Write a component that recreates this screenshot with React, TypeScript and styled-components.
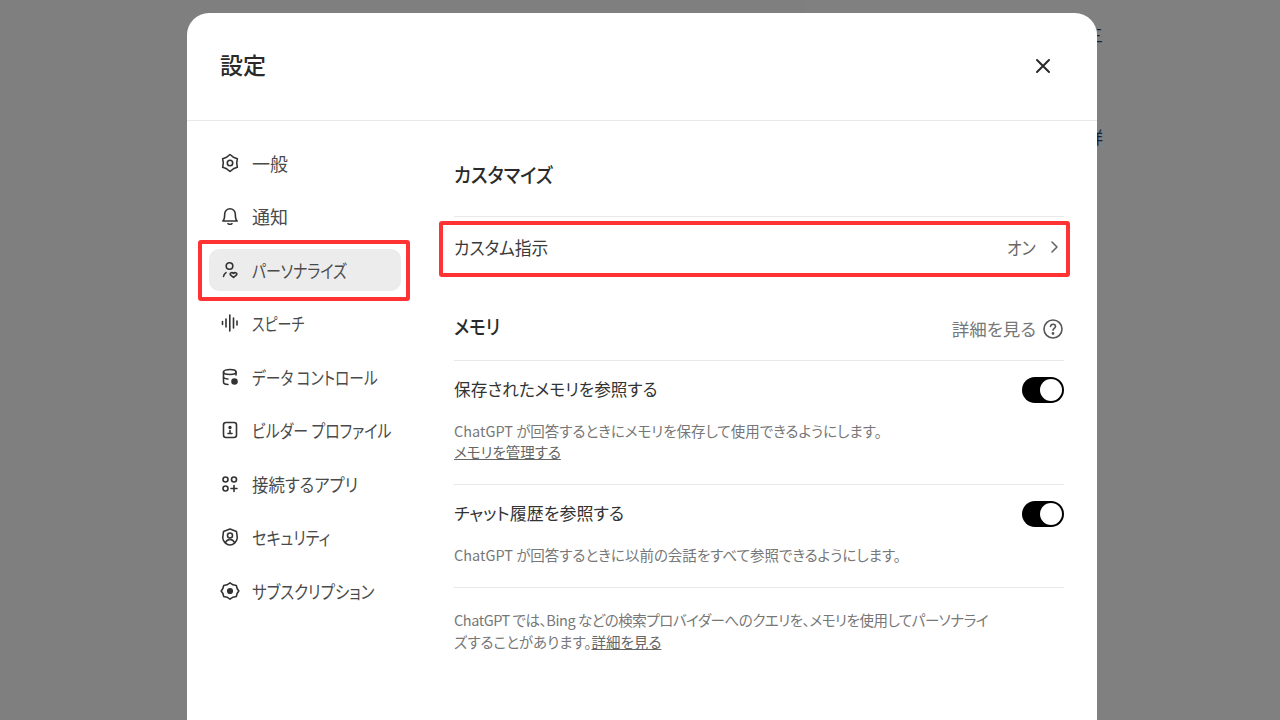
import styled, { createGlobalStyle } from "styled-components";

const GlobalStyle = createGlobalStyle`
  html, body {
    margin: 0;
    padding: 0;
    height: 720px;
    overflow: hidden;
    background: #7f7f7f;
    font-family: "Noto Sans CJK JP", "Noto Sans", sans-serif;
    font-feature-settings: "palt";
    color: #1f1f1f;
  }
`;

const Backdrop = styled.div`
  position: relative;
  width: 1280px;
  height: 720px;
  padding: 13px 0 0 187px;
  box-sizing: border-box;
  overflow: hidden;
  background: linear-gradient(to right, #7f7f7f 805px, #808080 805px);
`;

// text of the page behind the dialog, only a sliver shows past its right edge
const PeekText = styled.span<{ $top: number }>`
  position: absolute;
  left: 1086px;
  top: ${(p) => p.$top}px;
  width: 17px;
  font-size: 17px;
  line-height: 20px;
  color: #14233c;
  clip-path: inset(0 0 0 11px);
  overflow: hidden;
`;

const Modal = styled.div`
  position: relative;
  width: 910px;
  height: 760px;
  background: #fff;
  border-radius: 22px;
`;

const Header = styled.header`
  height: 107px;
  padding: 0 44px 0 33px;
  display: flex;
  align-items: center;
  justify-content: space-between;
  border-bottom: 1px solid #e8e8e8;
`;

const Title = styled.h1`
  margin: 0 0 5px;
  font-size: 23px;
  font-weight: 500;
  color: #2a2a2a;
`;

const CloseButton = styled.button`
  display: flex;
  padding: 0;
  margin-bottom: 1px;
  border: 0;
  background: none;
  color: #2a2a2a;
`;

const Body = styled.div`
  display: flex;
`;

const Sidebar = styled.nav`
  width: 192px;
  margin-left: 22px;
  padding-top: 21px;
  display: flex;
  flex-direction: column;
  gap: 11.5px;
  flex: none;
`;

const NavItem = styled.div<{ $active?: boolean }>`
  height: 42px;
  padding: 0 0 1px 11px;
  box-sizing: border-box;
  display: flex;
  align-items: center;
  gap: 12px;
  border-radius: 10px;
  font-size: 18px;
  color: #4a4a4a;
  white-space: nowrap;
  background: ${(p) => (p.$active ? "#ececec" : "transparent")};
  svg {
    flex: none;
    color: #333;
  }
`;

// the katakana in the reference are set much narrower than Noto's
const Narrow = styled.span<{ $scale: number }>`
  display: inline-block;
  transform: scaleX(${(p) => p.$scale});
  transform-origin: left center;
  white-space: nowrap;
`;

const SettingLabel = styled(Narrow)`
  margin-bottom: 4px;
`;

const Content = styled.main`
  width: 610px;
  margin-left: 53px;
  padding-top: 33px;
`;

const SectionHeading = styled.div`
  display: flex;
  align-items: center;
  justify-content: space-between;
  padding-bottom: 12px;
`;

const Heading = styled.h2`
  margin: 0;
  font-size: 20px;
  line-height: 42px;
  font-weight: 500;
  color: #2a2a2a;
`;

const CustomHeading = styled(Heading)`
  margin-bottom: 20px;
`;

const LearnMore = styled.div`
  display: flex;
  align-items: center;
  gap: 6px;
  font-size: 17.5px;
  color: #777;
  margin-top: 3px;
  svg {
    color: #555;
  }
`;

const RowLink = styled.div`
  height: 62px;
  box-sizing: border-box;
  padding-bottom: 2px;
  display: flex;
  align-items: center;
  justify-content: space-between;
  border-top: 1px solid #e8e8e8;
  font-size: 18px;
  color: #3a3a3a;
  margin-bottom: 28px;
`;

const RowValue = styled.div`
  display: flex;
  align-items: center;
  gap: 7px;
  margin-right: 3px;
  color: #666;
`;

const Setting = styled.section<{ $height: number; $pad?: number }>`
  height: ${(p) => p.$height}px;
  box-sizing: border-box;
  border-top: 1px solid #e8e8e8;
  padding-top: ${(p) => p.$pad ?? 16}px;
`;

const SettingTop = styled.div`
  display: flex;
  align-items: center;
  justify-content: space-between;
  height: 26px;
  font-size: 17px;
  color: #333;
`;

const Description = styled.p`
  margin: 17px 0 0;
  font-size: 14.5px;
  line-height: 21px;
  color: #777;
`;

const Footnote = styled(Description)`
  margin: 0;
  line-height: 22px;
  white-space: nowrap;
`;

const Tight = styled.span`
  letter-spacing: -0.45px;
`;

const UnderLink = styled.a`
  color: #666;
  text-decoration: underline;
`;

const Toggle = styled.div`
  width: 42px;
  height: 26px;
  padding: 2px;
  box-sizing: border-box;
  border-radius: 13px;
  background: #000;
  display: flex;
  justify-content: flex-end;
  &::after {
    content: "";
    width: 22px;
    height: 22px;
    border-radius: 50%;
    background: #fff;
  }
`;

const Callout = styled.div<{ $x: number; $y: number; $w: number; $h: number }>`
  position: absolute;
  left: ${(p) => p.$x}px;
  top: ${(p) => p.$y}px;
  width: ${(p) => p.$w}px;
  height: ${(p) => p.$h}px;
  box-sizing: border-box;
  border: 4px solid #ff3333;
  border-radius: 3px;
  pointer-events: none;
`;

const Icon = ({ children }: { children: React.ReactNode }) => (
  <svg
    width="20"
    height="20"
    viewBox="0 0 20 20"
    fill="none"
    stroke="currentColor"
    strokeWidth="1.6"
    strokeLinecap="round"
    strokeLinejoin="round"
  >
    {children}
  </svg>
);

const navItems: { label: string; scale: number; active?: boolean; icon: React.ReactNode }[] = [
  {
    label: "一般",
    scale: 1,
    icon: (
      <>
        <path d="M10 1.500L13.350 4.200 17.360 5.750 16.700 10 17.360 14.250 13.350 15.800 10 18.500 6.650 15.800 2.640 14.250 3.300 10 2.640 5.750 6.650 4.200z" />
        <circle cx="10" cy="10" r="2.700" />
      </>
    ),
  },
  {
    label: "通知",
    scale: 1,
    icon: (
      <>
        <path d="M2.800 15c1.500-1.200 1.900-3 1.900-7a5.300 5.300 0 0 1 10.600 0c0 4 .4 5.800 1.900 7z" />
        <path d="M8 17.600c1 .7 3 .7 4 0" />
      </>
    ),
  },
  {
    label: "パーソナライズ",
    scale: 0.83,
    active: true,
    icon: (
      <>
        <circle cx="9.500" cy="6" r="3.300" />
        <path d="M3.500 16.500c.2-1.500 1-2.800 2.500-3.800" />
        <path d="M13.500 17.500l-3-2.600c-1.200-1.600 1.300-3.300 3-1.500 1.700-1.800 4.200-.1 3 1.500z" />
      </>
    ),
  },
  {
    label: "スピーチ",
    scale: 0.78,
    icon: <path d="M2.500 8.500v3M6 6v8M9.800 2v16M13.500 5v10M17 8v4" />,
  },
  {
    label: "データ コントロール",
    scale: 0.82,
    icon: (
      <>
        <path d="M16 8V5c0-1.500-2.500-2.500-6-2.500S3.500 3.500 3.500 5v10c0 1.500 2 2.500 4.500 2.500" />
        <path d="M3.500 5c0 1.500 2.500 2.500 6.500 2.500s6-1 6-2.500M3.500 10.500c1 1 2.500 1.500 4.500 1.500" />
        <circle cx="14.500" cy="14.500" r="2.500" fill="currentColor" />
      </>
    ),
  },
  {
    label: "ビルダー プロファイル",
    scale: 0.83,
    icon: (
      <>
        <rect x="3.500" y="2.500" width="13" height="15" rx="2.500" />
        <circle cx="10" cy="7.500" r=".9" fill="currentColor" />
        <path d="M8 13.500h4M10 10.500v3" />
      </>
    ),
  },
  {
    label: "接続するアプリ",
    scale: 0.91,
    icon: (
      <>
        <circle cx="5.500" cy="5.500" r="2.500" />
        <circle cx="14" cy="5.500" r="2.500" />
        <circle cx="5.500" cy="14.500" r="2.500" />
        <path d="M14 11.500v6M11 14.500h6" />
      </>
    ),
  },
  {
    label: "セキュリティ",
    scale: 0.84,
    icon: (
      <>
        <path d="M10 2l6.500 2.500.8 6.500c-.5 3.500-3.800 7-7.300 7s-6.800-3.500-7.300-7l.8-6.500z" />
        <circle cx="10" cy="8.500" r="2.500" />
        <path d="M5.500 15.500c1-2 2.500-3 4.500-3s3.500 1 4.500 3" />
      </>
    ),
  },
  {
    label: "サブスクリプション",
    scale: 0.86,
    icon: (
      <>
        <path d="M10 1.800l3 2 3.300.7.8 3 1.700 2.500-1.700 2.500-.8 3-3.300.7-3 2-3-2-3.300-.7-.8-3L1.200 10l1.700-2.500.8-3L7 3.800z" />
        <circle cx="10" cy="10" r="2.300" fill="currentColor" />
      </>
    ),
  },
];

export default function App() {
  return (
    <Backdrop>
      <GlobalStyle />
      <PeekText $top={25}>三</PeekText>
      <PeekText $top={127}>詳</PeekText>
      <Modal>
        <Header>
          <Title>設定</Title>
          <CloseButton aria-label="閉じる">
            <svg width="20" height="20" viewBox="0 0 20 20" fill="none" stroke="currentColor" strokeWidth="2" strokeLinecap="round">
              <path d="M4 4l12 12M16 4L4 16" />
            </svg>
          </CloseButton>
        </Header>
        <Body>
          <Sidebar>
            {navItems.map((item) => (
              <NavItem key={item.label} $active={item.active}>
                <Icon>{item.icon}</Icon>
                <Narrow $scale={item.scale}>{item.label}</Narrow>
              </NavItem>
            ))}
          </Sidebar>
          <Content>
            <CustomHeading>
              <Narrow $scale={0.92}>カスタマイズ</Narrow>
            </CustomHeading>
            <RowLink>
              <Narrow $scale={0.93}>カスタム指示</Narrow>
              <RowValue>
                <Narrow $scale={0.88}>オン</Narrow>
                <svg width="14" height="14" viewBox="0 0 14 14" fill="none" stroke="currentColor" strokeWidth="1.600" strokeLinecap="round" strokeLinejoin="round">
                  <path d="M5 2l5 5-5 5" />
                </svg>
              </RowValue>
            </RowLink>
            <SectionHeading>
              <Heading>
                <Narrow $scale={0.87}>メモリ</Narrow>
              </Heading>
              <LearnMore>
                詳細を見る
                <svg width="22" height="22" viewBox="0 0 22 22" fill="none" stroke="currentColor" strokeWidth="1.600" strokeLinecap="round">
                  <circle cx="11" cy="11" r="9" />
                  <path d="M8.500 8.500c.3-3 5-3 5 0 0 1.800-2.500 1.800-2.500 3.700" />
                  <circle cx="11" cy="15.500" r=".6" fill="currentColor" />
                </svg>
              </LearnMore>
            </SectionHeading>
            <Setting $height={124}>
              <SettingTop>
                <SettingLabel $scale={0.98}>保存されたメモリを参照する</SettingLabel>
                <Toggle />
              </SettingTop>
              <Description>
                ChatGPT が回答するときにメモリを保存して使用できるようにします。
                <br />
                <UnderLink>メモリを管理する</UnderLink>
              </Description>
            </Setting>
            <Setting $height={103}>
              <SettingTop>
                <SettingLabel $scale={1}>チャット履歴を参照する</SettingLabel>
                <Toggle />
              </SettingTop>
              <Description>ChatGPT が回答するときに以前の会話をすべて参照できるようにします。</Description>
            </Setting>
            <Setting $height={80} $pad={21}>
              <Footnote>
                <Tight>ChatGPT では、Bing などの検索プロバイダーへのクエリを、メモリを使用してパーソナライ</Tight>
                <br />
                ズすることがあります。<UnderLink>詳細を見る</UnderLink>
              </Footnote>
            </Setting>
          </Content>
        </Body>
        <Callout $x={11} $y={227} $w={212} $h={61} />
        <Callout $x={252} $y={208} $w={631} $h={56} />
      </Modal>
    </Backdrop>
  );
}
